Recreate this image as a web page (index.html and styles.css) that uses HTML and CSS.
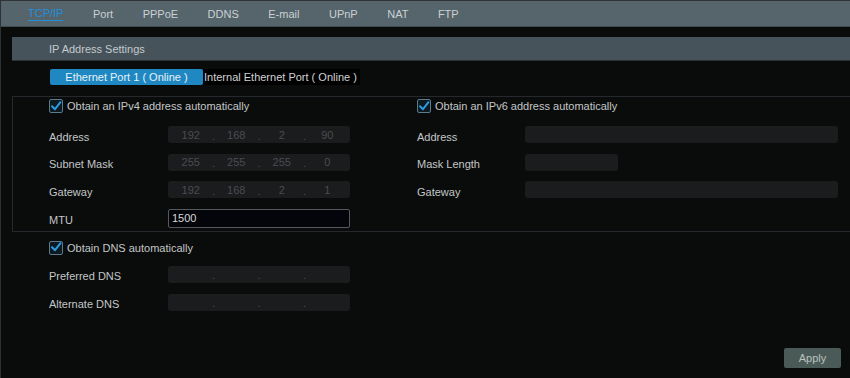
FILE: index.html
```html
<!DOCTYPE html>
<html>
<head>
<meta charset="utf-8">
<link rel="stylesheet" href="styles.css">
</head>
<body>
<div class="page">
  <nav class="tabs">
    <span class="tab active">TCP/IP</span>
    <span class="tab">Port</span>
    <span class="tab">PPPoE</span>
    <span class="tab">DDNS</span>
    <span class="tab">E-mail</span>
    <span class="tab">UPnP</span>
    <span class="tab">NAT</span>
    <span class="tab">FTP</span>
  </nav>
  <main class="content">
    <div class="section-title">IP Address Settings</div>
    <div class="port-tabs">
      <span class="port-tab selected">Ethernet Port 1 ( Online )</span>
      <span class="port-tab">Internal Ethernet Port ( Online )</span>
    </div>
    <div class="ipbox">
      <div class="col col-v4">
        <label class="check-row"><span class="cb"><svg viewBox="0 0 14 14" width="14" height="14"><path d="M3 7.2 L6 10.2 L11.5 3.2" fill="none" stroke="#2b9be0" stroke-width="2" stroke-linecap="round" stroke-linejoin="round"/></svg></span>Obtain an IPv4 address automatically</label>
        <div class="field"><span class="lbl">Address</span><span class="ip"><i>192</i><b>.</b><i>168</i><b>.</b><i>2</i><b>.</b><i>90</i></span></div>
        <div class="field"><span class="lbl">Subnet Mask</span><span class="ip"><i>255</i><b>.</b><i>255</i><b>.</b><i>255</i><b>.</b><i>0</i></span></div>
        <div class="field"><span class="lbl">Gateway</span><span class="ip"><i>192</i><b>.</b><i>168</i><b>.</b><i>2</i><b>.</b><i>1</i></span></div>
        <div class="field field-mtu"><span class="lbl">MTU</span><span class="mtu">1500</span></div>
      </div>
      <div class="col col-v6">
        <label class="check-row"><span class="cb"><svg viewBox="0 0 14 14" width="14" height="14"><path d="M3 7.2 L6 10.2 L11.5 3.2" fill="none" stroke="#2b9be0" stroke-width="2" stroke-linecap="round" stroke-linejoin="round"/></svg></span>Obtain an IPv6 address automatically</label>
        <div class="field"><span class="lbl">Address</span><span class="inp wide"></span></div>
        <div class="field"><span class="lbl">Mask Length</span><span class="inp short"></span></div>
        <div class="field"><span class="lbl">Gateway</span><span class="inp wide"></span></div>
      </div>
    </div>
    <div class="dns">
      <label class="check-row"><span class="cb"><svg viewBox="0 0 14 14" width="14" height="14"><path d="M3 7.2 L6 10.2 L11.5 3.2" fill="none" stroke="#2b9be0" stroke-width="2" stroke-linecap="round" stroke-linejoin="round"/></svg></span>Obtain DNS automatically</label>
      <div class="field"><span class="lbl">Preferred DNS</span><span class="ip"><i></i><b>.</b><i></i><b>.</b><i></i><b>.</b><i></i></span></div>
      <div class="field"><span class="lbl">Alternate DNS</span><span class="ip"><i></i><b>.</b><i></i><b>.</b><i></i><b>.</b><i></i></span></div>
    </div>
    <div class="footer"><button class="apply">Apply</button></div>
  </main>
</div>
</body>
</html>
```
FILE: styles.css
```css
html, body {
  margin: 0;
  padding: 0;
  background: #0a0c0c;
}
body {
  font-family: "Liberation Sans", Arial, sans-serif;
  font-size: 11px;
  color: #c4c6c7;
  overflow: hidden;
}
.page {
  width: 849px;
  height: 378px;
  border-left: 1px solid #2e3236;
  display: flex;
  flex-direction: column;
}
.tabs {
  height: 25px;
  border-top: 1px solid #2f3337;
  border-bottom: 1px solid #3e4a50;
  background: #56646b;
  display: flex;
  align-items: center;
  gap: 29.5px;
  padding-left: 27px;
}
.tab {
  color: #cad1d4;
  line-height: 14px;
}
.tab.active {
  color: #2090dc;
  border-bottom: 1px solid #2090dc;
  line-height: 13px;
  margin-top: 1px;
}
.content {
  flex: 1;
  display: flex;
  flex-direction: column;
  padding-left: 11px;
  padding-top: 10px;
}
.section-title {
  height: 24px;
  line-height: 24px;
  background: #46535b;
  border-bottom: 1px solid #2c3337;
  padding-left: 37px;
  color: #c4c9cc;
  box-sizing: border-box;
}
.port-tabs {
  display: flex;
  margin-top: 8px;
  padding-left: 38px;
  height: 16px;
}
.port-tab {
  background: #000;
  color: #d0d2d4;
  line-height: 16px;
  padding: 0 3px 0 1px;
  white-space: nowrap;
}
.port-tab.selected {
  background: #1f88c2;
  color: #e8f2f8;
  width: 153px;
  padding: 0;
  text-align: center;
  border-radius: 2px;
}
.ipbox {
  margin-top: 11px;
  border: 1px solid #26282e;
  border-right: none;
  display: grid;
  grid-template-columns: 368px 1fr;
  padding: 2px 11px 3px 36px;
}
.col {
  display: flex;
  flex-direction: column;
  gap: 10.5px;
}
.check-row {
  display: flex;
  align-items: center;
  height: 14px;
  gap: 4px;
  margin-bottom: 2.5px;
}
.cb {
  width: 14px;
  height: 14px;
  box-sizing: border-box;
  border: 1.5px solid #5a7a8e;
  border-radius: 2px;
  background: #0e1a22;
  position: relative;
}
.cb svg {
  position: absolute;
  left: -1px;
  top: -1.5px;
}
.field {
  display: flex;
  align-items: center;
  height: 17px;
}
.col-v4 .lbl, .dns .lbl {
  width: 119px;
  margin-top: 4px;
}
.col-v6 .lbl {
  width: 108px;
  margin-top: 4px;
}
.ip {
  width: 182px;
  height: 17px;
  background: #1a1c1e;
  border-radius: 3px;
  display: flex;
  align-items: center;
  color: #4a4d4f;
}
.ip i {
  font-style: normal;
  flex: 1;
  text-align: center;
}
.ip b {
  font-weight: normal;
  width: 0;
  display: flex;
  justify-content: center;
  margin-top: 2px;
}
.field-mtu {
  height: 19px;
}
.mtu {
  width: 182px;
  height: 19px;
  box-sizing: border-box;
  border: 1px solid #55585c;
  border-radius: 2px;
  background: #04050a;
  color: #d6d8da;
  padding-left: 3px;
  line-height: 17px;
}
.inp {
  height: 17px;
  background: #1a1c1e;
  border-radius: 3px;
}
.inp.wide { width: 313px; }
.inp.short { width: 93px; }
.dns {
  padding: 9px 0 0 37px;
  display: flex;
  flex-direction: column;
  gap: 11px;
}
.dns .check-row {
  margin-bottom: 0;
}
.footer {
  margin-top: auto;
  display: flex;
  justify-content: flex-end;
  padding: 0 9px 10px 0;
}
.apply {
  width: 57px;
  height: 20px;
  border: none;
  border-radius: 2px;
  background: #4a5a57;
  color: #b9c2be;
  font-family: "Liberation Sans", Arial, sans-serif;
  font-size: 11px;
  padding: 0;
}
```
